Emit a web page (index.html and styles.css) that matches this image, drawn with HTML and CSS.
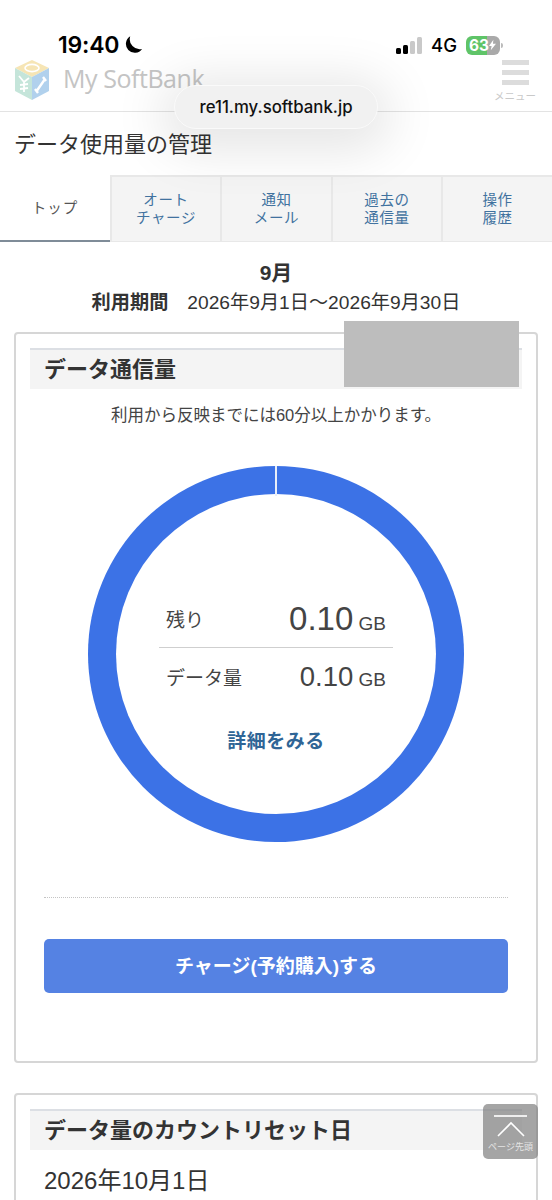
FILE: index.html
```html
<!DOCTYPE html>
<html lang="ja">
<head>
<meta charset="utf-8">
<title>データ使用量の管理</title>
<link rel="stylesheet" href="styles.css">
</head>
<body>
<div class="page">
  <header class="site-header">
    <div class="brand">
      <svg class="cube" viewBox="0 0 36 42" width="36" height="42" aria-hidden="true">
        <polygon points="18,1 35,9 18,18 1,9" fill="#f6e3ae"/>
        <polygon points="1,9 18,18 18,41 1,32" fill="#bfe3d6"/>
        <polygon points="18,18 35,9 35,32 18,41" fill="#a9cdec"/>
        <ellipse cx="18" cy="9" rx="7" ry="3.6" fill="none" stroke="#fff" stroke-width="1.6"/>
        <path d="M5 17l5 6 5-4M10 23v10M6 26l8-1M6 30l8-1" fill="none" stroke="#fff" stroke-width="1.8"/>
        <path d="M22 33l9-13M21 30l3 4M29 18l3 4" fill="none" stroke="#fff" stroke-width="2.4"/>
      </svg>
      <span class="brand-name">My SoftBank</span>
    </div>
    <div class="menu">
      <span class="menu-bars"><i></i><i></i><i></i></span>
      <span class="menu-label">メニュー</span>
    </div>
  </header>

  <h1 class="page-title">データ使用量の管理</h1>

  <nav class="tabs">
    <a class="tab active">トップ</a>
    <a class="tab">オート<br>チャージ</a>
    <a class="tab">通知<br>メール</a>
    <a class="tab">過去の<br>通信量</a>
    <a class="tab">操作<br>履歴</a>
  </nav>

  <div class="period">
    <div class="month">9月</div>
    <div class="range"><b>利用期間</b><span>2026年9月1日～2026年9月30日</span></div>
  </div>

  <section class="card usage">
    <h2 class="card-title">データ通信量</h2>
    <div class="redact"></div>
    <p class="note">利用から反映までには60分以上かかります。</p>
    <div class="donut">
      <div class="tick"></div>
      <div class="donut-inner">
        <div class="row first"><span class="label">残り</span><span class="value"><em class="big">0.10</em> GB</span></div>
        <div class="row second"><span class="label">データ量</span><span class="value"><em class="mid">0.10</em> GB</span></div>
        <a class="detail">詳細をみる</a>
      </div>
    </div>
    <div class="dots"></div>
    <a class="charge">チャージ(予約購入)する</a>
  </section>

  <section class="card reset">
    <h2 class="card-title">データ量のカウントリセット日</h2>
    <p class="date">2026年10月1日</p>
  </section>
</div>

<div class="status">
  <div class="status-left">
    <span class="time">19:40</span>
    <svg viewBox="0 0 18 18" width="20" height="20" aria-hidden="true"><path d="M6.5 1.2A8 8 0 1 0 17.2 12.6 9 9 0 0 1 6.5 1.2z" fill="#000"/></svg>
  </div>
  <div class="status-right">
    <span class="signal"><i class="s1"></i><i class="s2"></i><i class="s3"></i><i class="s4"></i></span>
    <span class="net">4G</span>
    <span class="battery">63<svg viewBox="0 0 8 12" width="7" height="12" aria-hidden="true"><path d="M5 0L0 7h3l-1 5 6-7.500H4.500z" fill="#fff"/></svg></span>
    <span class="nub"></span>
  </div>
</div>

<div class="url-pill">re11.my.softbank.jp</div>

<a class="to-top">
  <span class="to-top-line"></span>
  <svg viewBox="0 0 28 16" width="28" height="16" aria-hidden="true"><path d="M1 15L14 2l13 13" fill="none" stroke="#fff" stroke-width="1.600"/></svg>
  <span class="to-top-label">ページ先頭</span>
</a>
</body>
</html>
```
FILE: styles.css
```css
* { box-sizing: border-box; }
html, body { margin: 0; padding: 0; }
body {
  height: 1200px;
  overflow: hidden;
  background: #fff;
  color: #333;
  font-family: "Liberation Sans", "Noto Sans CJK JP", sans-serif;
  position: relative;
}
.page { display: flex; flex-direction: column; height: 1200px; overflow: hidden; }

.site-header {
  flex: none;
  height: 112px;
  padding: 55px 16px 0 14px;
  border-bottom: 1px solid #e3e3e3;
  display: flex;
  justify-content: space-between;
  align-items: flex-start;
}
.brand { display: flex; align-items: center; gap: 13px; }
.cube { margin-top: 4px; opacity: .9; }
.brand-name { font-size: 25px; color: #c4c4c4; font-family: "Open Sans", "Liberation Sans", sans-serif; letter-spacing: -.45px; }
.menu { display: flex; flex-direction: column; align-items: center; width: 42px; }
.menu-bars { display: flex; flex-direction: column; gap: 5px; width: 27px; margin-top: 5px; }
.menu-bars i { display: block; height: 5px; background: #dcdcdc; }
.menu-label { font-size: 10.500px; color: #c9c9c9; margin-top: 3px; white-space: nowrap; }

.page-title {
  flex: none;
  margin: 0;
  height: 63px;
  padding: 19px 0 0 14px;
  font-size: 22px;
  line-height: 28px;
  font-weight: 400;
  color: #333;
}

.tabs { flex: none; display: grid; grid-template-columns: 110px 110px 111px 110px 111px; height: 67px; }
.tab {
  display: flex;
  align-items: center;
  justify-content: center;
  text-align: center;
  background: #f4f4f4;
  border: 1px solid #e8e8e8;
  border-width: 2px 0 1px 2px;
  color: #41729f;
  font-size: 14.500px;
  line-height: 18px;
  letter-spacing: .6px;
}
.tab.active {
  background: #fff;
  color: #555;
  border: 0;
  border-bottom: 2px solid #7f8c98;
  letter-spacing: 1px;
}

.period { flex: none; text-align: center; padding-top: 17px; height: 90px; }
.month { font-size: 21px; line-height: 28px; font-weight: 700; color: #333; }
.range { font-size: 19.200px; line-height: 30px; margin-top: 1px; color: #333; white-space: nowrap; }
.range b { font-weight: 700; margin-right: 19px; }

.card {
  flex: none;
  margin: 0 14px;
  border: 2px solid #d6d6d6;
  border-radius: 4px;
  padding: 14px 14px 0;
  background: #fff;
  position: relative;
}
.card-title {
  margin: 0;
  height: 41px;
  padding-left: 14px;
  background: #f4f4f4;
  border-top: 2px solid #dcdfe4;
  font-size: 22px;
  line-height: 39px;
  font-weight: 700;
  color: #333;
}
.usage { height: 731px; }
.redact { position: absolute; left: 328px; top: -13px; width: 175px; height: 66px; background: #bdbdbd; }
.note { margin: 16px 0 0; text-align: center; font-size: 16.500px; line-height: 20px; color: #444; }

.donut {
  width: 376px;
  height: 376px;
  margin: 41px auto 0;
  border-radius: 50%;
  background: #3c72e6;
  position: relative;
  display: flex;
  align-items: center;
  justify-content: center;
}
.tick { position: absolute; left: 187px; top: 0; width: 2px; height: 30px; background: #e8eef9; }
.donut-inner {
  width: 320px;
  height: 320px;
  border-radius: 50%;
  background: #fff;
  padding-top: 96px;
  display: flex;
  flex-direction: column;
  align-items: center;
}
.row {
  width: 234px;
  display: flex;
  justify-content: space-between;
  align-items: center;
  padding: 0 7px;
  font-size: 19px;
  color: #444;
}
.row.first { height: 58px; border-bottom: 1px solid #cfcfcf; }
.row.second { height: 57px; }
.label { font-size: 19px; }
.value { font-size: 19px; }
.value em { font-style: normal; }
.big { font-size: 33px; }
.mid { font-size: 27.500px; }
.detail { margin-top: 24px; color: #2f6596; font-size: 19px; line-height: 26px; font-weight: 700; letter-spacing: .5px; }

.dots { border-top: 1px dotted #c4c4c4; margin: 55px 14px 0; }
.charge {
  display: block;
  margin: 41px 14px 0;
  height: 54px;
  line-height: 55px;
  text-align: center;
  background: #5582e3;
  border-radius: 5px;
  color: #fff;
  font-size: 19px;
  font-weight: 700;
}

.reset { margin-top: 30px; height: 200px; }
.date { margin: 15px 0 0 14px; font-size: 24px; line-height: 32px; color: #333; }

.status {
  position: absolute;
  left: 58px;
  right: 49px;
  top: 31px;
  height: 28px;
  display: flex;
  justify-content: space-between;
  align-items: center;
}
.status-left { display: flex; align-items: center; gap: 4px; }
.time { font-family: Inter, "Liberation Sans", sans-serif; font-size: 23px; font-weight: 600; color: #000; letter-spacing: -.2px; }
.status-right { display: flex; align-items: center; }
.signal { display: flex; align-items: flex-end; gap: 2px; height: 17px; margin-right: 9px; }
.signal i { display: block; width: 5px; border-radius: 1.500px; }
.s1 { height: 6px; background: #000; }
.s2 { height: 9px; background: #000; }
.s3 { height: 13px; background: #c9c9c9; }
.s4 { height: 17px; background: #c9c9c9; }
.net { font-family: Inter, "Liberation Sans", sans-serif; font-size: 18.500px; font-weight: 500; color: #000; margin-right: 9px; }
.battery {
  width: 34px;
  height: 19px;
  border-radius: 6px;
  background: linear-gradient(to right, #5fc468 63%, #a9a9a9 63%);
  color: #fff;
  font-family: Inter, "Liberation Sans", sans-serif;
  font-size: 15.500px;
  font-weight: 700;
  line-height: 19px;
  padding-left: 3px;
  display: flex;
  align-items: center;
}
.nub { width: 2px; height: 5px; background: #bbb; border-radius: 0 2px 2px 0; margin-left: 1px; }

.url-pill {
  position: absolute;
  left: 174px;
  top: 85px;
  width: 204px;
  height: 44px;
  border-radius: 22px;
  background: #f1f1f1;
  border: 1px solid #fafafa;
  box-shadow: 0 8px 50px 14px rgba(0,0,0,.1);
  color: #111;
  font-family: Inter, "Liberation Sans", sans-serif;
  font-size: 16.800px;
  font-weight: 500;
  line-height: 42px;
  text-align: center;
  white-space: nowrap;
}

.to-top {
  position: absolute;
  left: 483px;
  top: 1104px;
  width: 55px;
  height: 55px;
  background: rgba(130,130,130,.72);
  border-radius: 5px;
  display: flex;
  flex-direction: column;
  align-items: center;
}
.to-top-line { display: block; width: 33px; height: 2px; background: #eee; margin-top: 11px; }
.to-top svg { margin-top: 4px; }
.to-top-label { font-size: 9px; color: #e4e4e4; margin-top: 3px; white-space: nowrap; }
```
